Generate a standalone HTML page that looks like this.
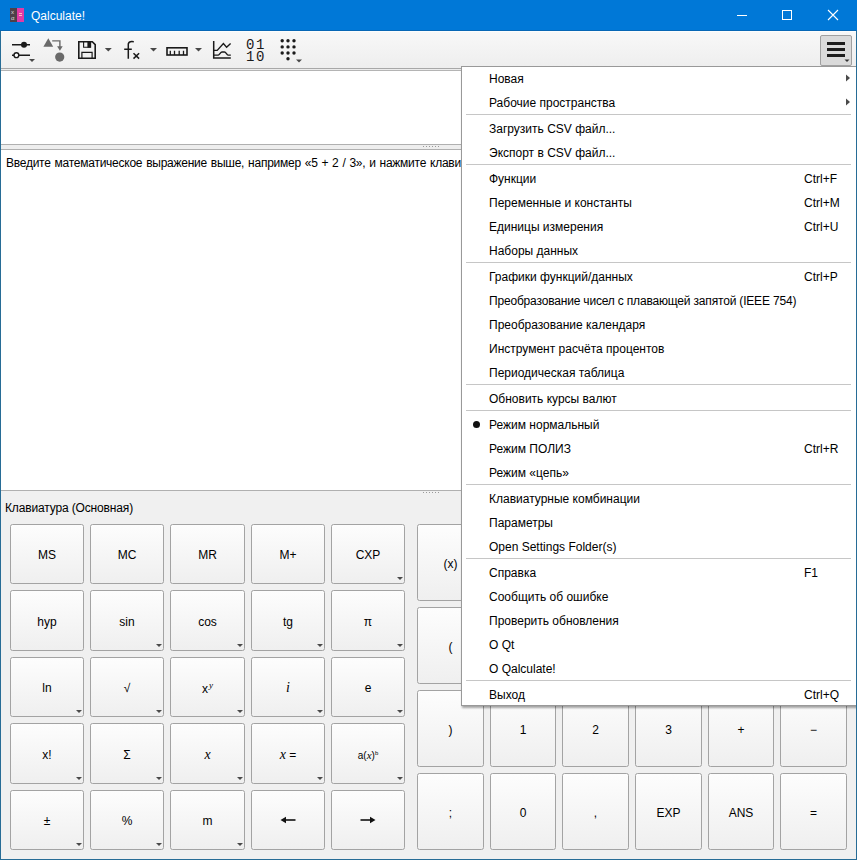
<!DOCTYPE html><html><head><meta charset="utf-8"><style>
*{box-sizing:border-box}
html,body{margin:0;padding:0}
body{width:857px;height:860px;position:relative;overflow:hidden;background:#f0f0f0;font-family:"Liberation Sans", sans-serif;font-size:12px;color:#000}
.a{position:absolute}
.t{position:absolute;font-size:12px;line-height:14px;white-space:nowrap}
.btn{position:absolute;border:1px solid #a3a3a3;border-radius:2.5px;background:linear-gradient(#fdfdfd,#efefef)}
.btn .l{position:absolute;left:0;right:0;text-align:center;font-size:12px;line-height:14px;white-space:nowrap}
.arr{position:absolute;width:0;height:0;border-left:3px solid transparent;border-right:3px solid transparent;border-top:3px solid #4a4a4a}
sup{font-size:8px;vertical-align:0;position:relative;top:-4px}
.sm{font-size:10px} .se{font-family:'Liberation Serif',serif;font-size:14px} .se2{font-family:'Liberation Serif',serif;font-size:11px} .si{font-family:'Liberation Serif',serif;font-style:italic;font-size:9px;top:-5px} .sb{font-size:6px;top:-4px}
.sep{position:absolute;left:466px;width:385px;height:1px;background:#c6c6c6}
</style></head><body>
<div class="a" style="left:0;top:0;width:857px;height:31px;background:#0078d7"></div>
<div class="a" style="left:0;top:30px;width:857px;height:1px;background:#0767b5"></div>
<div class="a" style="left:10px;top:8px;width:7px;height:14px;background:#4d4049"></div>
<div class="a" style="left:17px;top:8px;width:7px;height:14px;background:#e23aa6"></div>
<div class="a" style="left:11px;top:9px;font:6px/6px 'Liberation Sans';color:#ddd">x</div>
<div class="a" style="left:11px;top:15px;font:6px/6px 'Liberation Sans';color:#ddd">α</div>
<div class="a" style="left:19px;top:13px;width:3px;height:1px;background:#fbb"></div>
<div class="a" style="left:19px;top:15px;width:3px;height:1px;background:#fbb"></div>
<div class="t" style="left:31px;top:9px;color:#fff">Qalculate!</div>
<div class="a" style="left:737px;top:15px;width:10px;height:1px;background:#fff"></div>
<div class="a" style="left:782px;top:10px;width:10px;height:10px;border:1px solid #fff"></div>
<svg class="a" style="left:827px;top:9px" width="12" height="12" viewBox="0 0 12 12"><path d="M1 1L11 11M11 1L1 11" stroke="#fff" stroke-width="1.1"/></svg>
<div class="a" style="left:0;top:31px;width:1px;height:829px;background:#276c96"></div>
<div class="a" style="left:856px;top:31px;width:1px;height:829px;background:#276c96"></div>
<div class="a" style="left:0;top:859px;width:857px;height:1px;background:#276c96"></div>
<div class="a" style="left:1px;top:31px;width:855px;height:37px;background:linear-gradient(#f8f8f8,#eeeeee)"></div>
<div class="a" style="left:1px;top:31px;width:855px;height:1px;background:#fcfdfd"></div>
<div class="a" style="left:1px;top:68px;width:855px;height:1px;background:#a8a8a8"></div>
<div class="a" style="left:1px;top:69px;width:855px;height:1px;background:#ececec"></div>
<div class="a" style="left:1px;top:70px;width:855px;height:1px;background:#b4b4b4"></div>
<svg class="a" style="left:0;top:31px" width="320" height="37" viewBox="0 31 320 37"><path d="M12 44.7H30M12 55.3H30" stroke="#1a1a1a" stroke-width="1.6"/><circle cx="24" cy="44.7" r="3" fill="#1a1a1a"/><circle cx="16.4" cy="55.2" r="2.4" fill="#fff" stroke="#1a1a1a" stroke-width="1.4"/><path d="M29 59.1h6l-3 3z" fill="#484848"/><path d="M48.3 38.2L53.2 46.7H43.4Z" fill="#6a6a6a"/><path d="M52.2 40.9H59.9V47" stroke="#6a6a6a" stroke-width="1.4" fill="none"/><path d="M57.1 46.2L59.9 50.8L62.7 46.2Z" fill="#6a6a6a"/><circle cx="59.7" cy="57.1" r="4.6" fill="#6a6a6a"/><path d="M78.8 41.8H92.3L95.2 44.7V58.2H78.8Z" fill="none" stroke="#1a1a1a" stroke-width="1.6"/><path d="M83.6 41.8V47.3H90.6V41.8" fill="none" stroke="#1a1a1a" stroke-width="1.1"/><rect x="87.4" y="41.8" width="3.4" height="5.8" fill="#1a1a1a"/><path d="M81.9 58.2V52.4H92.1V58.2" fill="none" stroke="#1a1a1a" stroke-width="1.2"/><path d="M104.8 48.1h7l-3.5 3.5z" fill="#484848"/><path d="M133.8 41.7C132 41.4 128.8 41.2 128.3 43.8V58.7M124.2 49.3H131.8" fill="none" stroke="#1a1a1a" stroke-width="1.5"/><path d="M133.5 53.3L139.1 58.6M139.1 53.3L133.5 58.6" stroke="#1a1a1a" stroke-width="1.5"/><path d="M150 48.1h7l-3.5 3.5z" fill="#484848"/><rect x="167" y="47.8" width="20" height="7.2" fill="none" stroke="#1a1a1a" stroke-width="1.6"/><path d="M170.3 55V50.8M174.5 55V50.8M179.2 55V50.8M183.5 55V50.8" stroke="#1a1a1a" stroke-width="1.3"/><path d="M195 48.1h7l-3.5 3.5z" fill="#484848"/><path d="M213.7 41.1V58.1H230.8" fill="none" stroke="#1a1a1a" stroke-width="1.5"/><path d="M213.7 50.4H217.2L223.4 43.6L226.6 47.2L230.6 43.5" fill="none" stroke="#1a1a1a" stroke-width="1.4"/><path d="M213.7 55.1H218.3C219.5 55.1 220.5 52 222 52H224.5C226 52 226.8 55.1 228 55.1H230.8" fill="none" stroke="#1a1a1a" stroke-width="1.4"/><circle cx="282.2" cy="40.7" r="1.7" fill="#1a1a1a"/><circle cx="288" cy="40.7" r="1.7" fill="#1a1a1a"/><circle cx="294" cy="40.7" r="1.7" fill="#1a1a1a"/><circle cx="282.2" cy="46.9" r="1.7" fill="#1a1a1a"/><circle cx="288" cy="46.9" r="1.7" fill="#1a1a1a"/><circle cx="294" cy="46.9" r="1.7" fill="#1a1a1a"/><circle cx="282.2" cy="53" r="1.7" fill="#1a1a1a"/><circle cx="288" cy="53" r="1.7" fill="#1a1a1a"/><circle cx="294" cy="53" r="1.7" fill="#1a1a1a"/><circle cx="288" cy="58.7" r="1.7" fill="#1a1a1a"/><path d="M296 59.4h6l-3 3z" fill="#484848"/></svg>
<div class="a" style="left:246px;top:39px;font:14px/12px 'Liberation Mono';color:#1a1a1a;letter-spacing:1.6px">01<br>10</div>
<div class="a" style="left:820px;top:35px;width:32px;height:31px;border:1px solid #a0a0a0;border-radius:2px;background:#dadada"></div>
<div class="a" style="left:827px;top:42px;width:18px;height:3px;background:#1c1c1c"></div>
<div class="a" style="left:827px;top:48px;width:18px;height:3px;background:#1c1c1c"></div>
<div class="a" style="left:827px;top:54px;width:18px;height:3px;background:#1c1c1c"></div>
<svg class="a" style="left:844px;top:59px" width="7" height="4"><path d="M0.5 0.5h5l-2.5 2.5z" fill="#333"/></svg>
<div class="a" style="left:1px;top:71px;width:855px;height:73px;background:#fff"></div>
<div class="a" style="left:1px;top:144px;width:855px;height:1px;background:#b0b0b0"></div>
<div class="a" style="left:1px;top:145px;width:855px;height:4px;background:#eeeeee"></div>
<div class="a" style="left:1px;top:149px;width:855px;height:1px;background:#b0b0b0"></div>
<div class="a" style="left:1px;top:150px;width:855px;height:340px;background:#fff"></div>
<div class="a" style="left:1px;top:490px;width:855px;height:1px;background:#b0b0b0"></div>
<div class="a" style="left:423px;top:146px;width:1px;height:1px;background:#9a9a9a"></div>
<div class="a" style="left:423px;top:492px;width:1px;height:1px;background:#9a9a9a"></div>
<div class="a" style="left:426px;top:146px;width:1px;height:1px;background:#9a9a9a"></div>
<div class="a" style="left:426px;top:492px;width:1px;height:1px;background:#9a9a9a"></div>
<div class="a" style="left:429px;top:146px;width:1px;height:1px;background:#9a9a9a"></div>
<div class="a" style="left:429px;top:492px;width:1px;height:1px;background:#9a9a9a"></div>
<div class="a" style="left:432px;top:146px;width:1px;height:1px;background:#9a9a9a"></div>
<div class="a" style="left:432px;top:492px;width:1px;height:1px;background:#9a9a9a"></div>
<div class="a" style="left:435px;top:146px;width:1px;height:1px;background:#9a9a9a"></div>
<div class="a" style="left:435px;top:492px;width:1px;height:1px;background:#9a9a9a"></div>
<div class="a" style="left:438px;top:146px;width:1px;height:1px;background:#9a9a9a"></div>
<div class="a" style="left:438px;top:492px;width:1px;height:1px;background:#9a9a9a"></div>
<div class="t" style="left:6px;top:156px;letter-spacing:-0.25px;word-spacing:0.8px">Введите математическое выражение выше, например «5 + 2 / 3», и нажмите клавиши Enter.</div>
<div class="t" style="left:5px;top:501px;letter-spacing:-0.15px">Клавиатура (Основная)</div>
<div class="btn" style="left:10px;top:524px;width:74px;height:60px"><div class="l" style="top:23px">MS</div></div>
<div class="btn" style="left:90px;top:524px;width:74px;height:60px"><div class="l" style="top:23px">MC</div></div>
<div class="btn" style="left:170px;top:524px;width:75px;height:60px"><div class="l" style="top:23px">MR</div></div>
<div class="btn" style="left:251px;top:524px;width:74px;height:60px"><div class="l" style="top:23px">M+</div></div>
<div class="btn" style="left:331px;top:524px;width:74px;height:60px"><div class="l" style="top:23px">CXP</div><div class="arr" style="left:65px;top:52px"></div></div>
<div class="btn" style="left:10px;top:590px;width:74px;height:61px"><div class="l" style="top:24px">hyp</div></div>
<div class="btn" style="left:90px;top:590px;width:74px;height:61px"><div class="l" style="top:24px">sin</div><div class="arr" style="left:65px;top:53px"></div></div>
<div class="btn" style="left:170px;top:590px;width:75px;height:61px"><div class="l" style="top:24px">cos</div><div class="arr" style="left:66px;top:53px"></div></div>
<div class="btn" style="left:251px;top:590px;width:74px;height:61px"><div class="l" style="top:24px">tg</div><div class="arr" style="left:65px;top:53px"></div></div>
<div class="btn" style="left:331px;top:590px;width:74px;height:61px"><div class="l" style="top:24px">π</div><div class="arr" style="left:65px;top:53px"></div></div>
<div class="btn" style="left:10px;top:657px;width:74px;height:60px"><div class="l" style="top:23px">ln</div><div class="arr" style="left:65px;top:52px"></div></div>
<div class="btn" style="left:90px;top:657px;width:74px;height:60px"><div class="l" style="top:23px">√</div><div class="arr" style="left:65px;top:52px"></div></div>
<div class="btn" style="left:170px;top:657px;width:75px;height:60px"><div class="l" style="top:23px"><span style="position:relative;top:1px">x<sup class="si" style="margin-left:1px">y</sup></span></div><div class="arr" style="left:66px;top:52px"></div></div>
<div class="btn" style="left:251px;top:657px;width:74px;height:60px"><div class="l" style="top:23px"><i class="se">i</i></div><div class="arr" style="left:65px;top:52px"></div></div>
<div class="btn" style="left:331px;top:657px;width:74px;height:60px"><div class="l" style="top:23px">e</div><div class="arr" style="left:65px;top:52px"></div></div>
<div class="btn" style="left:10px;top:723px;width:74px;height:61px"><div class="l" style="top:24px">x!</div><div class="arr" style="left:65px;top:53px"></div></div>
<div class="btn" style="left:90px;top:723px;width:74px;height:61px"><div class="l" style="top:24px">Σ</div><div class="arr" style="left:65px;top:53px"></div></div>
<div class="btn" style="left:170px;top:723px;width:75px;height:61px"><div class="l" style="top:24px"><i class="se">x</i></div><div class="arr" style="left:66px;top:53px"></div></div>
<div class="btn" style="left:251px;top:723px;width:74px;height:61px"><div class="l" style="top:24px"><i class="se">x</i> =</div><div class="arr" style="left:65px;top:53px"></div></div>
<div class="btn" style="left:331px;top:723px;width:74px;height:61px"><div class="l" style="top:24px"><span class="sm">a(<i class="se2">x</i>)<sup class="sb">b</sup></span></div><div class="arr" style="left:65px;top:53px"></div></div>
<div class="btn" style="left:10px;top:790px;width:74px;height:60px"><div class="l" style="top:23px">±</div><div class="arr" style="left:65px;top:52px"></div></div>
<div class="btn" style="left:90px;top:790px;width:74px;height:60px"><div class="l" style="top:23px">%</div><div class="arr" style="left:65px;top:52px"></div></div>
<div class="btn" style="left:170px;top:790px;width:75px;height:60px"><div class="l" style="top:23px">m</div><div class="arr" style="left:66px;top:52px"></div></div>
<div class="btn" style="left:251px;top:790px;width:74px;height:60px"><svg class="a" style="left:27px;top:24px" width="18" height="10"><path d="M16.5 5H5" stroke="#111" stroke-width="1.6"/><path d="M1.5 5L7 1.8V8.2Z" fill="#111"/></svg></div>
<div class="btn" style="left:331px;top:790px;width:74px;height:60px"><svg class="a" style="left:27px;top:24px" width="18" height="10"><path d="M1.5 5H13" stroke="#111" stroke-width="1.6"/><path d="M16.5 5L11 1.8V8.2Z" fill="#111"/></svg></div>
<div class="btn" style="left:417px;top:524px;width:67px;height:77px"><div class="l" style="top:32px">(x)</div></div>
<div class="btn" style="left:490px;top:524px;width:66px;height:77px"></div>
<div class="btn" style="left:562px;top:524px;width:67px;height:77px"></div>
<div class="btn" style="left:635px;top:524px;width:67px;height:77px"></div>
<div class="btn" style="left:708px;top:524px;width:66px;height:77px"></div>
<div class="btn" style="left:780px;top:524px;width:67px;height:77px"></div>
<div class="btn" style="left:417px;top:607px;width:67px;height:77px"><div class="l" style="top:32px">(</div></div>
<div class="btn" style="left:490px;top:607px;width:66px;height:77px"></div>
<div class="btn" style="left:562px;top:607px;width:67px;height:77px"></div>
<div class="btn" style="left:635px;top:607px;width:67px;height:77px"></div>
<div class="btn" style="left:708px;top:607px;width:66px;height:77px"></div>
<div class="btn" style="left:780px;top:607px;width:67px;height:77px"></div>
<div class="btn" style="left:417px;top:690px;width:67px;height:77px"><div class="l" style="top:32px">)</div></div>
<div class="btn" style="left:490px;top:690px;width:66px;height:77px"><div class="l" style="top:32px">1</div></div>
<div class="btn" style="left:562px;top:690px;width:67px;height:77px"><div class="l" style="top:32px">2</div></div>
<div class="btn" style="left:635px;top:690px;width:67px;height:77px"><div class="l" style="top:32px">3</div></div>
<div class="btn" style="left:708px;top:690px;width:66px;height:77px"><div class="l" style="top:32px">+</div></div>
<div class="btn" style="left:780px;top:690px;width:67px;height:77px"><div class="l" style="top:32px">−</div></div>
<div class="btn" style="left:417px;top:773px;width:67px;height:77px"><div class="l" style="top:32px">;</div></div>
<div class="btn" style="left:490px;top:773px;width:66px;height:77px"><div class="l" style="top:32px">0</div></div>
<div class="btn" style="left:562px;top:773px;width:67px;height:77px"><div class="l" style="top:32px">,</div></div>
<div class="btn" style="left:635px;top:773px;width:67px;height:77px"><div class="l" style="top:32px">EXP</div></div>
<div class="btn" style="left:708px;top:773px;width:66px;height:77px"><div class="l" style="top:32px">ANS</div></div>
<div class="btn" style="left:780px;top:773px;width:67px;height:77px"><div class="l" style="top:32px">=</div></div>
<div class="a" style="left:461px;top:66px;width:396px;height:640px;background:#fff;border:1px solid #999;border-right:none;box-shadow:1px 2px 2px rgba(0,0,0,0.35)"></div>
<div class="t" style="left:489px;top:72px;">Новая</div>
<svg class="a" style="left:845px;top:74px" width="6" height="8"><path d="M1 0.5L5 4L1 7.5Z" fill="#4a4a4a"/></svg>
<div class="t" style="left:489px;top:96px;">Рабочие пространства</div>
<svg class="a" style="left:845px;top:98px" width="6" height="8"><path d="M1 0.5L5 4L1 7.5Z" fill="#4a4a4a"/></svg>
<div class="sep" style="top:114px"></div>
<div class="t" style="left:489px;top:122px;">Загрузить CSV файл...</div>
<div class="t" style="left:489px;top:146px;">Экспорт в CSV файл...</div>
<div class="sep" style="top:164px"></div>
<div class="t" style="left:489px;top:172px;">Функции</div>
<div class="t" style="left:804px;top:172px;">Ctrl+F</div>
<div class="t" style="left:489px;top:196px;">Переменные и константы</div>
<div class="t" style="left:804px;top:196px;">Ctrl+M</div>
<div class="t" style="left:489px;top:220px;">Единицы измерения</div>
<div class="t" style="left:804px;top:220px;">Ctrl+U</div>
<div class="t" style="left:489px;top:244px;">Наборы данных</div>
<div class="sep" style="top:262px"></div>
<div class="t" style="left:489px;top:270px;">Графики функций/данных</div>
<div class="t" style="left:804px;top:270px;">Ctrl+P</div>
<div class="t" style="left:489px;top:294px;letter-spacing:-0.18px">Преобразование чисел с плавающей запятой (IEEE 754)</div>
<div class="t" style="left:489px;top:318px;">Преобразование календаря</div>
<div class="t" style="left:489px;top:342px;">Инструмент расчёта процентов</div>
<div class="t" style="left:489px;top:366px;">Периодическая таблица</div>
<div class="sep" style="top:384px"></div>
<div class="t" style="left:489px;top:392px;">Обновить курсы валют</div>
<div class="sep" style="top:410px"></div>
<div class="t" style="left:489px;top:418px;">Режим нормальный</div>
<div class="a" style="left:473px;top:421px;width:7px;height:7px;border-radius:50%;background:#111"></div>
<div class="t" style="left:489px;top:442px;">Режим ПОЛИЗ</div>
<div class="t" style="left:804px;top:442px;">Ctrl+R</div>
<div class="t" style="left:489px;top:466px;">Режим «цепь»</div>
<div class="sep" style="top:484px"></div>
<div class="t" style="left:489px;top:492px;">Клавиатурные комбинации</div>
<div class="t" style="left:489px;top:516px;">Параметры</div>
<div class="t" style="left:489px;top:540px;">Open Settings Folder(s)</div>
<div class="sep" style="top:558px"></div>
<div class="t" style="left:489px;top:566px;">Справка</div>
<div class="t" style="left:804px;top:566px;">F1</div>
<div class="t" style="left:489px;top:590px;">Сообщить об ошибке</div>
<div class="t" style="left:489px;top:614px;">Проверить обновления</div>
<div class="t" style="left:489px;top:638px;">O Qt</div>
<div class="t" style="left:489px;top:662px;">O Qalculate!</div>
<div class="sep" style="top:680px"></div>
<div class="t" style="left:489px;top:688px;">Выход</div>
<div class="t" style="left:804px;top:688px;">Ctrl+Q</div>
<div class="a" style="left:856px;top:31px;width:1px;height:829px;background:#276c96"></div>
</body></html>
